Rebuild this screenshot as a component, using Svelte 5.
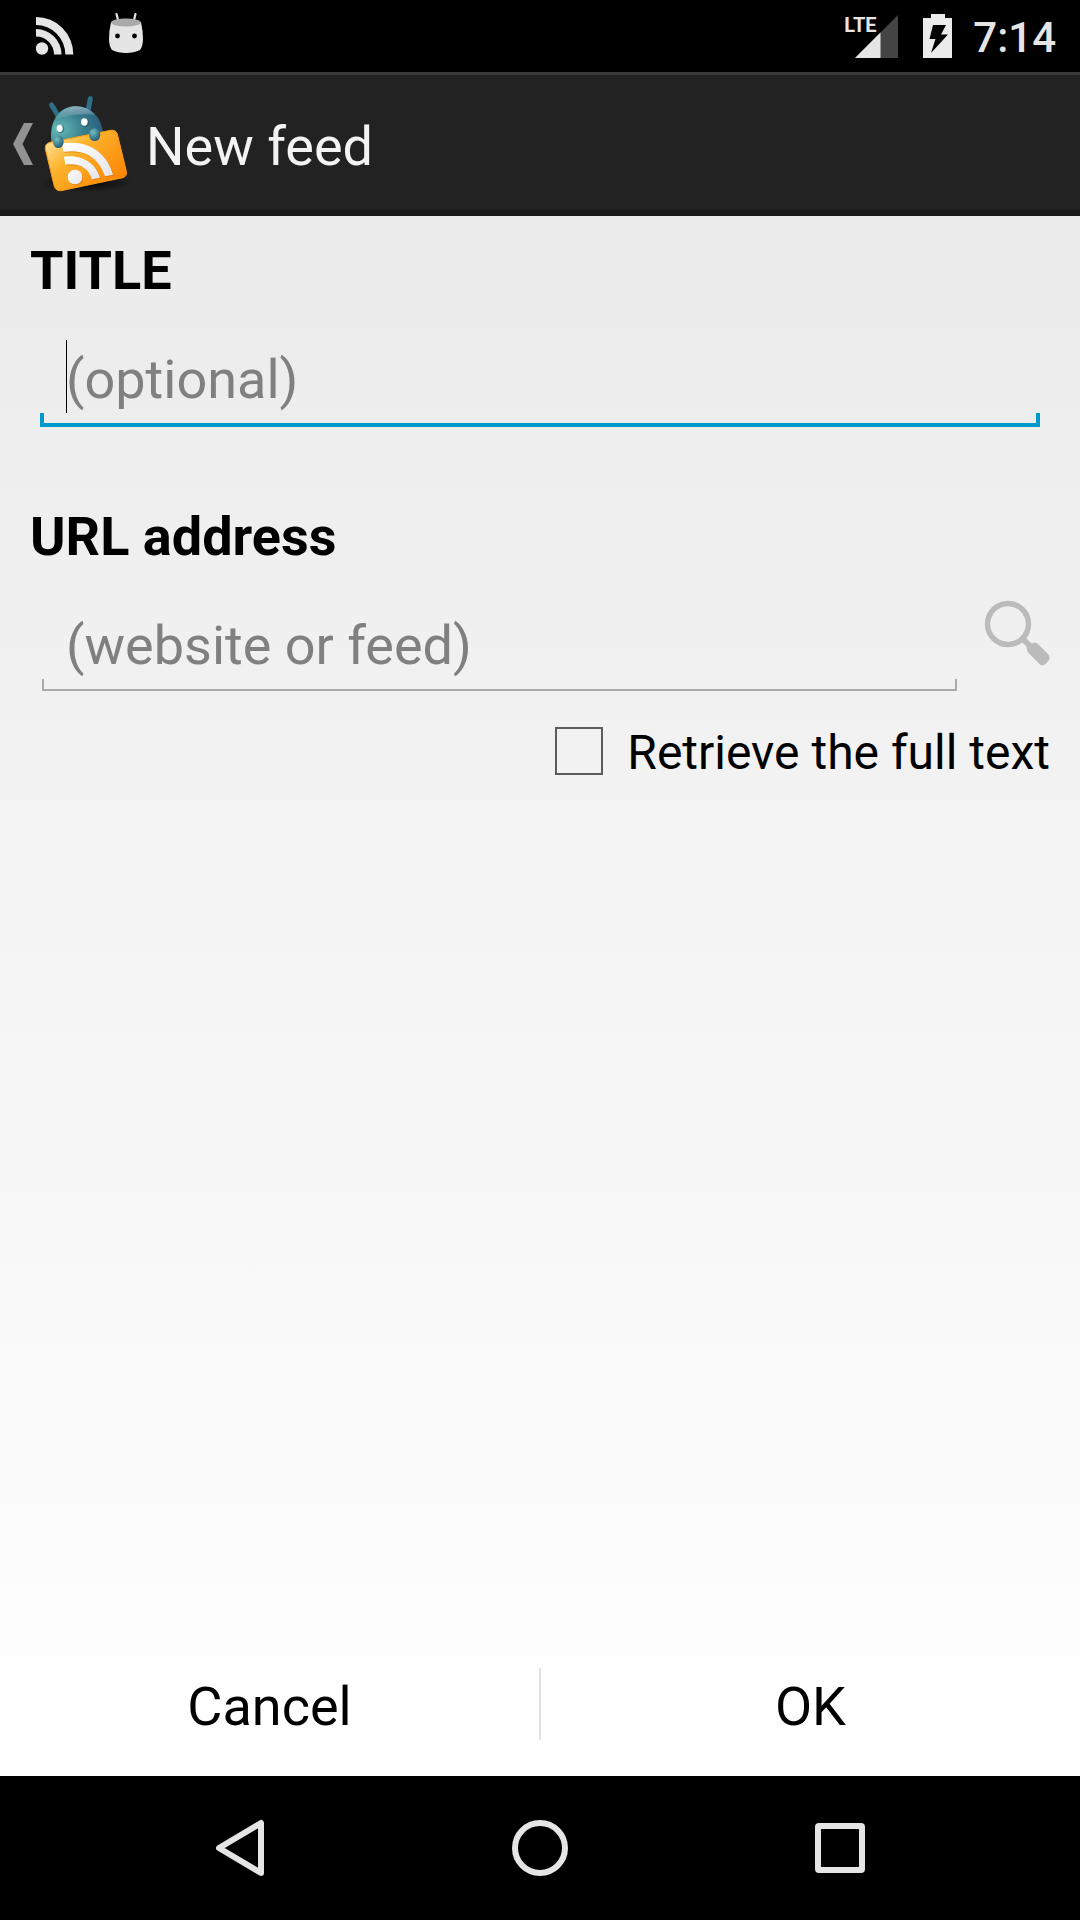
<script>
  let title = $state('');
  let url = $state('');
  let fullText = $state(false);
</script>

<div class="screen">
  <div class="status">
    <svg class="rss" width="38" height="38" viewBox="0 0 38 38" aria-hidden="true">
      <g fill="#e5e5e5">
        <circle cx="6" cy="31.500" r="6.200" />
        <path d="M0 0A37.300 37.300 0 0 1 37.300 37.500H29.300A29.500 29.500 0 0 0 0 8Z" />
        <path d="M0 12A25.500 25.500 0 0 1 25.500 37.500H18A18 18 0 0 0 0 19.500Z" />
      </g>
    </svg>
    <svg class="droid" width="36" height="42" viewBox="0 0 36 42" aria-hidden="true">
      <path d="M8.500 2L10.500 10M27.500 2L25.500 10" stroke="#e5e5e5" stroke-width="2.200" stroke-linecap="round" />
      <path d="M3 10Q1 19 1 27Q1 34 4 38Q10 41 18 41Q26 41 32 38Q35 34 35 27Q35 19 33 10Z" fill="#e5e5e5" />
      <ellipse cx="18" cy="10.500" rx="15" ry="4" fill="#aaa" />
      <circle cx="9.500" cy="24" r="2.400" fill="#000" />
      <circle cx="26.500" cy="24" r="2.400" fill="#000" />
    </svg>
    <span class="spacer"></span>
    <div class="signal">
      <span class="lte">LTE</span>
      <svg width="43" height="43" viewBox="0 0 43 43" aria-hidden="true">
        <path d="M43 0V43H0Z" fill="#444" />
        <path d="M25.500 17.500V43H0Z" fill="#e5e5e5" />
      </svg>
    </div>
    <svg width="30" height="44" viewBox="0 0 30 44" aria-hidden="true">
      <path d="M8 0H22V4H29V44H0V4H8Z" fill="#ebebeb" />
      <path d="M10 11H23L18 20.500H25L8 39L12.500 25H6.500Z" fill="#000" />
    </svg>
    <time>7:14</time>
  </div>

  <header>
    <button class="up" aria-label="Navigate up">
      <svg width="20" height="42" viewBox="0 0 20 42" aria-hidden="true">
        <path d="M11 0H20L9.500 21L20 42H11L0 21Z" fill="#929292" />
      </svg>
      <svg width="96" height="108" viewBox="114 60 288 324" aria-hidden="true">
        <defs>
          <linearGradient id="folder" x1="0" y1="0.100" x2="1" y2="0.900">
            <stop offset="0" stop-color="#ffe9a8" />
            <stop offset="0.350" stop-color="#fbb32c" />
            <stop offset="1" stop-color="#ff7e00" />
          </linearGradient>
          <radialGradient id="head" cx="0.150" cy="0.600" r="0.900">
            <stop offset="0" stop-color="#68bdb9" />
            <stop offset="0.500" stop-color="#3b8290" />
            <stop offset="1" stop-color="#275a7a" />
          </radialGradient>
          <linearGradient id="shine" x1="0" y1="0" x2="0" y2="1">
            <stop offset="0" stop-color="#fff" stop-opacity="0.450" />
            <stop offset="1" stop-color="#fff" stop-opacity="0" />
          </linearGradient>
          <radialGradient id="hand" cx="0.350" cy="0.300" r="0.750">
            <stop offset="0" stop-color="#74bfc2" />
            <stop offset="1" stop-color="#1f5874" />
          </radialGradient>
          <radialGradient id="shade">
            <stop offset="0" stop-color="#000" stop-opacity="0.850" />
            <stop offset="1" stop-color="#000" stop-opacity="0" />
          </radialGradient>
          <linearGradient id="waves" x1="0" y1="0" x2="1" y2="1">
            <stop offset="0" stop-color="#fff" />
            <stop offset="1" stop-color="#e4e4ea" />
          </linearGradient>
        </defs>
        <ellipse cx="258" cy="338" rx="140" ry="28" fill="url(#shade)" />
        <path d="M155 105L176 140" stroke="#2d6f86" stroke-width="15" stroke-linecap="round" />
        <path d="M271 86L264 124" stroke="#2d7188" stroke-width="15" stroke-linecap="round" />
        <path d="M154 215C148 158 172 112 222 108C272 106 305 140 309 192L290 225Z" fill="url(#head)" />
        <path d="M166 150C180 122 200 110 228 109C256 110 276 122 285 136C250 128 204 134 166 150Z" fill="url(#shine)" />
        <ellipse cx="182" cy="177" rx="11" ry="12" fill="#1d4b60" opacity="0.500" />
        <ellipse cx="256" cy="159" rx="12" ry="13" fill="#1d4b60" opacity="0.500" />
        <ellipse cx="179" cy="175" rx="9" ry="11" fill="#fff" />
        <ellipse cx="253" cy="156" rx="10" ry="11" fill="#fff" />
        <path d="M150 217L332 181Q347 178 352 192L379 304Q382 319 368 323L184 362Q169 364 163 350L136 237Q134 221 150 217Z" fill="url(#folder)" stroke="#f79a10" stroke-width="3" />
        <g fill="#c75f00" opacity="0.350">
          <circle cx="228" cy="325" r="22" />
          <path d="M190 224C268 212 326 252 342 317L318 322C302 270 262 240 194 249Z" />
          <path d="M196 264C250 256 292 284 304 326L280 331C270 298 242 282 200 288Z" />
        </g>
        <g fill="url(#waves)">
          <circle cx="225" cy="321" r="22" />
          <path d="M186 220C264 208 322 248 339 314L315 319C298 266 258 236 190 245Z" />
          <path d="M192 260C246 252 288 280 300 323L276 328C266 294 238 278 196 284Z" />
        </g>
        <ellipse cx="175" cy="215" rx="16" ry="19" fill="url(#hand)" />
        <ellipse cx="284" cy="194" rx="17" ry="19" fill="url(#hand)" />
      </svg>
    </button>
    <h1>New feed</h1>
  </header>

  <main>
    <form onsubmit={(e) => e.preventDefault()}>
      <label class="caption" for="title">TITLE</label>
      <div class="row first">
        <input id="title" class="field active" type="text" placeholder="(optional)" bind:value={title} />
      </div>

      <label class="caption" for="url">URL address</label>
      <div class="row">
        <input id="url" class="field" type="text" placeholder="(website or feed)" bind:value={url} />
        <button type="button" class="search" aria-label="Search for a feed">
          <svg width="68" height="68" viewBox="0 0 68 68" aria-hidden="true">
            <circle cx="25" cy="25" r="20.500" fill="none" stroke="#bbb" stroke-width="5.500" />
            <path d="M39 39L47 47" stroke="#bbb" stroke-width="6" />
            <path d="M43.500 47L51.500 43.500Q54 43.500 56 46L65 55Q68 58.500 65 62.500Q61.500 67 57.500 66L45 53.500Q43.500 51 43.500 47Z" fill="#bbb" />
          </svg>
        </button>
      </div>

      <label class="check">
        <input type="checkbox" bind:checked={fullText} />
        <span>Retrieve the full text</span>
      </label>

      <div class="actions">
        <button type="button">Cancel</button>
        <span class="divider"></span>
        <button type="submit">OK</button>
      </div>
    </form>
  </main>

  <nav>
    <button aria-label="Back">
      <svg width="60" height="60" viewBox="0 0 60 60" aria-hidden="true">
        <path d="M51 5V55L9 30Z" fill="none" stroke="#e5e5e5" stroke-width="6" stroke-linejoin="round" />
      </svg>
    </button>
    <button aria-label="Home">
      <svg width="60" height="60" viewBox="0 0 60 60" aria-hidden="true">
        <circle cx="30" cy="30" r="25" fill="none" stroke="#e5e5e5" stroke-width="6" />
      </svg>
    </button>
    <button aria-label="Recent apps">
      <svg width="60" height="60" viewBox="0 0 60 60" aria-hidden="true">
        <rect x="8" y="8" width="44" height="44" rx="1" fill="none" stroke="#e5e5e5" stroke-width="6" stroke-linejoin="round" />
      </svg>
    </button>
  </nav>
</div>

<style>
  :global(body) {
    margin: 0;
  }

  .screen {
    display: flex;
    flex-direction: column;
    min-height: 100vh;
    background: #000;
    font-family: Roboto, 'Liberation Sans', sans-serif;
    font-size: 54px;
    line-height: 64px;
    color: #000;
  }

  svg {
    display: block;
    flex: none;
  }

  button {
    margin: 0;
    padding: 0;
    border: 0;
    background: none;
    color: inherit;
    font: inherit;
    cursor: pointer;
  }

  .status {
    display: flex;
    align-items: center;
    box-sizing: border-box;
    height: 72px;
    padding: 0 24px 0 36px;
    color: #e5e5e5;
  }

  .rss {
    margin-right: 34px;
  }

  .droid {
    margin-bottom: 6px;
  }

  .spacer {
    flex: 1;
  }

  .signal {
    position: relative;
    padding-left: 11px;
    margin-right: 25px;
  }

  .lte {
    position: absolute;
    top: 0;
    left: 0;
    font-size: 20px;
    font-weight: 700;
    line-height: 20px;
  }

  time {
    margin-left: 20px;
    padding-top: 4px;
    font-size: 42px;
    font-weight: 500;
    line-height: 48px;
  }

  header {
    display: flex;
    align-items: center;
    height: 144px;
    padding-left: 13px;
    background: #222;
    box-shadow:
      inset 0 3px #393939,
      inset 0 -6px #1a1a1a;
    color: #f3f3f3;
  }

  .up {
    display: flex;
    align-items: center;
    gap: 5px;
  }

  h1 {
    margin: 0 0 0 12px;
    padding-top: 6px;
    font-size: 54px;
    font-weight: 400;
  }

  main {
    display: flex;
    flex: 1;
    background: linear-gradient(#ebebeb, #fff);
  }

  form {
    display: flex;
    flex: 1;
    flex-direction: column;
    padding-top: 23px;
  }

  .caption {
    padding: 0 30px;
    font-weight: 700;
  }

  .row {
    display: flex;
    align-items: flex-start;
    margin: 24px 29px 0 40px;
  }

  .first {
    margin-right: 40px;
    margin-bottom: 78px;
  }

  .field {
    --line: #aaa;
    --thick: 2px;
    flex: 1;
    min-width: 0;
    box-sizing: border-box;
    height: 100px;
    margin: 0;
    padding: 20px 24px 14px;
    border: 2px solid transparent;
    border-top: 0;
    outline: 0;
    background:
      linear-gradient(var(--line), var(--line)) left bottom / var(--thick) 12px no-repeat,
      linear-gradient(var(--line), var(--line)) right bottom / var(--thick) 12px no-repeat,
      linear-gradient(var(--line), var(--line)) left bottom / 100% var(--thick) no-repeat;
    color: #000;
    font: inherit;
  }

  .active {
    --line: #09c;
    --thick: 4px;
    padding: 20px 26px 16px;
    border: 0;
    background:
      linear-gradient(#000, #000) 26px 13px / 1px 73px no-repeat,
      linear-gradient(var(--line), var(--line)) left bottom / var(--thick) 14px no-repeat,
      linear-gradient(var(--line), var(--line)) right bottom / var(--thick) 14px no-repeat,
      linear-gradient(var(--line), var(--line)) left bottom / 100% var(--thick) no-repeat;
  }

  .field::placeholder {
    color: #808080;
    opacity: 1;
  }

  .search {
    margin-left: 24px;
    padding-top: 6px;
  }

  .check {
    display: flex;
    align-items: flex-start;
    align-self: flex-end;
    gap: 24px;
    margin: 32px 30px 0;
    font-size: 48px;
    line-height: 56px;
  }

  .check input {
    appearance: none;
    box-sizing: border-box;
    width: 48px;
    height: 48px;
    margin: 2px 0 0;
    border: 2px solid #5c5c5c;
  }

  .check input:checked {
    background: #09c;
  }

  .actions {
    display: flex;
    align-items: center;
    height: 144px;
    margin-top: auto;
  }

  .actions button {
    flex: 1;
    padding-top: 6px;
  }

  .divider {
    width: 2px;
    height: 72px;
    background: #e1e1e1;
  }

  nav {
    display: flex;
    align-items: center;
    height: 144px;
    padding: 0 90px;
  }

  nav button {
    display: flex;
    flex: 1;
    justify-content: center;
  }
</style>
